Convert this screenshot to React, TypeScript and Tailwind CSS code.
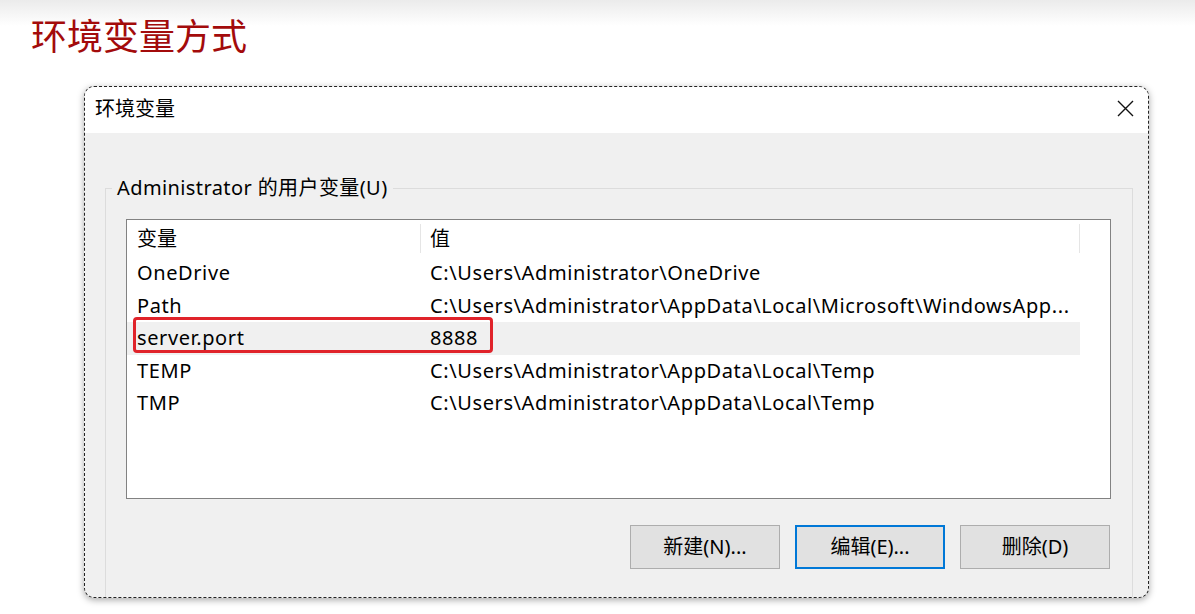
import React from 'react';

const font = { fontFamily: '"Noto Sans", "Noto Sans CJK SC", sans-serif' };

const rows = [
  { name: 'OneDrive', value: 'C:\\Users\\Administrator\\OneDrive' },
  { name: 'Path', value: 'C:\\Users\\Administrator\\AppData\\Local\\Microsoft\\WindowsApp...' },
  { name: 'server.port', value: '8888', selected: true },
  { name: 'TEMP', value: 'C:\\Users\\Administrator\\AppData\\Local\\Temp' },
  { name: 'TMP', value: 'C:\\Users\\Administrator\\AppData\\Local\\Temp' },
];

const buttons = [
  { label: '新建(N)...', focused: false },
  { label: '编辑(E)...', focused: true },
  { label: '删除(D)', focused: false },
];

export default function App() {
  return (
    <div
      className="w-[1195px] h-[614px] overflow-hidden bg-[linear-gradient(#ebebeb,#ffffff_26px)] text-black"
      style={font}
    >
      {/* Slide title */}
      <div className="pl-[31px] pt-[11px] h-[86px]">
        <h1 className="text-[36px] leading-[46px] text-[#a30b0b]" style={{ fontFamily: '"Noto Sans CJK SC", sans-serif' }}>
          环境变量方式
        </h1>
      </div>

      {/* Dialog */}
      <div className="ml-[84px] w-[1065px] h-[512px] flex flex-col border border-dashed border-[#222] rounded-[10px] overflow-hidden shadow-[0_2px_7px_rgba(0,0,0,0.35)] bg-[#f0f0f0] text-[20px] tracking-[0.6px]">
        <div className="h-[46px] shrink-0 bg-white flex items-center justify-between pl-[10px] pr-[14px]">
          <span className="leading-none mb-[3px] tracking-normal">环境变量</span>
          <svg width="17" height="17" viewBox="0 0 17 17" className="mb-[4px]">
            <path d="M1 1L16 16M16 1L1 16" stroke="#111" strokeWidth="1.4" />
          </svg>
        </div>

        <div className="flex-1 pl-[20px] pr-[15px] pt-[55px]">
          {/* Group box */}
          <div className="relative h-full border-l border-t border-r border-[#dcdcdc] pl-[20px] pr-[21px] pt-[30px]">
            <span className="absolute left-[6px] top-[-14px] bg-[#f0f0f0] px-[5px] leading-[26px] tracking-[0.4px]">
              Administrator 的用户变量(U)
            </span>

            {/* List view */}
            <div className="relative h-[280px] border border-[#828282] bg-white">
              <div className="flex items-stretch h-[37px] w-[953px] py-[4px]">
                <div className="w-[294px] pl-[10px] flex items-center border-r border-[#e5e5e5] tracking-normal">变量</div>
                <div className="flex-1 pl-[9px] flex items-center border-r border-[#e5e5e5] tracking-normal">值</div>
              </div>
              {rows.map((r) => (
                <div
                  key={r.name}
                  className={`flex items-center h-[32.5px] w-[953px] whitespace-nowrap ${r.selected ? 'bg-[#f0f0f0]' : ''}`}
                >
                  <div className="w-[294px] pl-[10px]">{r.name}</div>
                  <div className="flex-1 pl-[9px] overflow-hidden">{r.value}</div>
                </div>
              ))}
              <div className="absolute left-[6px] top-[97px] w-[360px] h-[36px] border-[3px] border-[#e0232a] rounded-[4px]" />
            </div>

            {/* Buttons */}
            <div className="flex justify-end gap-[15px] mt-[26px] mr-[1px]">
              {buttons.map((b) => (
                <button
                  key={b.label}
                  className={`w-[150px] h-[44px] bg-[#e1e1e1] tracking-normal ${b.focused ? 'border-2 border-[#0078d7]' : 'border border-[#adadad]'}`}
                >
                  {b.label}
                </button>
              ))}
            </div>
          </div>
        </div>
      </div>
    </div>
  );
}
